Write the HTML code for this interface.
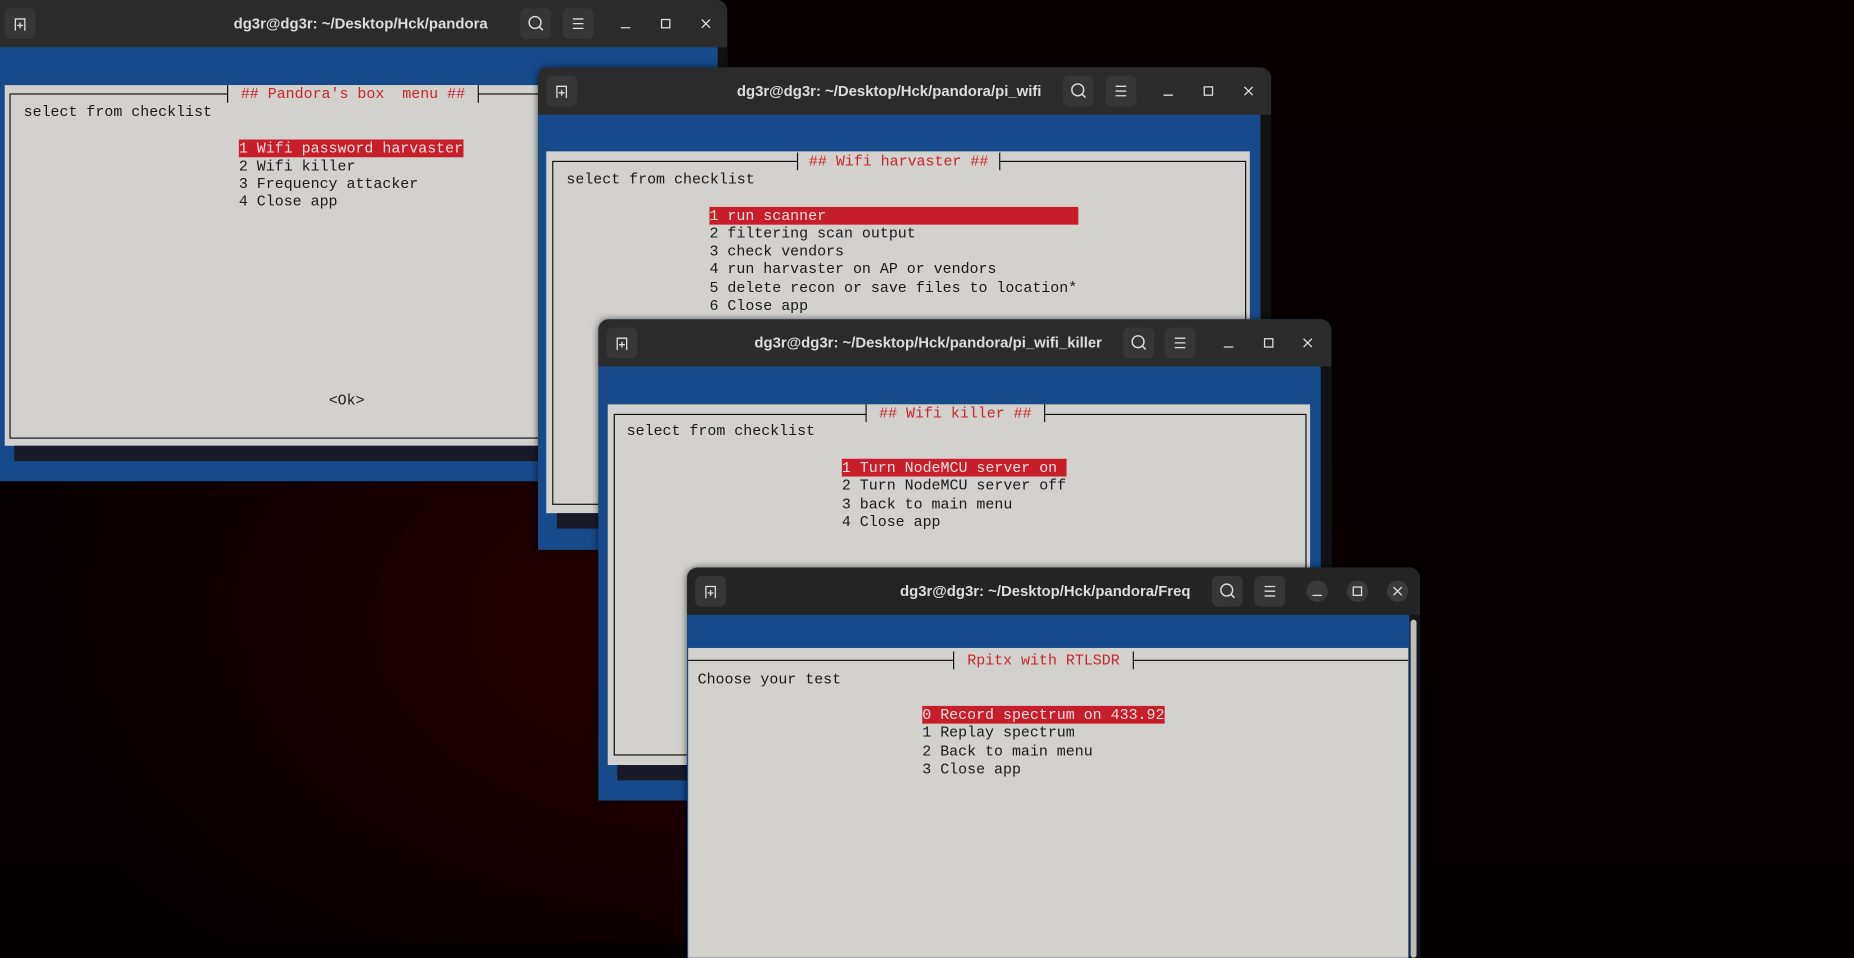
<!DOCTYPE html>
<html><head><meta charset="utf-8"><style>
html,body{margin:0;padding:0;width:1854px;height:943px;overflow:hidden;background:#050000}
#bg{position:absolute;left:0;top:0;width:1854px;height:943px;
background:radial-gradient(ellipse 700px 450px at 700px 620px,#240000 0%,#1a0000 45%,rgba(10,0,0,0) 100%),linear-gradient(180deg,#0a0000,#050000);}
#wrap{position:absolute;left:0;top:0;width:1568px;height:798px;transform:scale(1.18240);transform-origin:0 0}
.win{position:absolute;background:#164a8b;border-radius:9px 9px 0 0;overflow:hidden;box-shadow:0 0 6px rgba(0,0,0,.6)}
.tb{position:absolute;left:0;top:0;right:0;height:40px;background:#2b2b2b}
.tb.f{background:#242424}
.ttl{position:absolute;top:0;height:40px;font:bold 12.6px "Liberation Sans",sans-serif;line-height:40px;color:#dcdcdc;white-space:nowrap;transform:translateX(-50%)}
.btn{position:absolute;top:7px;width:26px;height:26px;border-radius:5px;background:#363636}
.btn svg,.wb svg{position:absolute;left:0;top:0}
.wb{position:absolute;top:11px;width:18px;height:18px;border-radius:9px}
.f .wb{background:#3a3a3a}
.sb{position:absolute;top:40px;bottom:0;width:9px;right:0;background:#111}
.dlg{position:absolute;background:#d2d1cd}
.bd{position:absolute;border:1px solid #111}
.sh{position:absolute;background:#191a28}
.lb{position:absolute;height:15px;background:#d2d1cd;border-left:1px solid #111;border-right:1px solid #111;text-align:center;color:#c7262c;font:12.65px/15px "Liberation Mono",monospace;white-space:pre}
.t{position:absolute;font:12.65px/15.25px "Liberation Mono",monospace;color:#1a1a1a;white-space:pre}
.hl{background:#c81e2a;color:#f0e0e0}
</style></head><body>
<div id="bg"></div>
<div id="wrap">

<!-- W1 -->
<div class="win" style="left:0;top:0;width:615px;height:407px;border-radius:0 9px 0 0">
  <div class="tb">
    <div class="btn" style="left:4px"><svg width="26" height="26"><path d="M9 19V9h8v10M13 12v5M10.5 14.5h5" stroke="#ddd" stroke-width="1.1" fill="none"/></svg></div>
    <div class="ttl" style="left:305px">dg3r@dg3r: ~/Desktop/Hck/pandora</div>
    <div class="btn" style="left:440px"><svg width="26" height="26"><circle cx="12.5" cy="12" r="5" stroke="#ddd" stroke-width="1.2" fill="none"/><path d="M16 15.5l3 3" stroke="#ddd" stroke-width="1.3"/></svg></div>
    <div class="btn" style="left:476px"><svg width="26" height="26"><path d="M8.5 9h9M8.5 13h9M8.5 17h9" stroke="#ddd" stroke-width="1.1"/></svg></div>
    <div class="wb" style="left:520px"><svg width="18" height="18"><path d="M5 12.5h8" stroke="#ddd" stroke-width="1.1"/></svg></div>
    <div class="wb" style="left:554px"><svg width="18" height="18"><rect x="5.5" y="5.5" width="7" height="7" stroke="#ddd" stroke-width="1.1" fill="none"/></svg></div>
    <div class="wb" style="left:588px"><svg width="18" height="18"><path d="M5.5 5.5l7 7M12.5 5.5l-7 7" stroke="#ddd" stroke-width="1.1"/></svg></div>
  </div>
  <div class="sb" style="width:8px"></div>
  <div class="dlg" style="left:4px;top:72px;width:601px;height:305px"></div>
  <div class="bd" style="left:8px;top:79px;width:590px;height:290px"></div>
  <div class="sh" style="left:12px;top:377px;width:595px;height:13px"></div>
  <div class="lb" style="left:192px;top:72px;width:211px">## Pandora's box  menu ##</div>
  <div class="t" style="left:20px;top:87px">select from checklist</div>
  <div class="t" style="left:202px;top:117.5px"><span class="hl">1 Wifi password harvaster</span>
2 Wifi killer
3 Frequency attacker
4 Close app</div>
  <div class="t" style="left:278px;top:331px">&lt;Ok&gt;</div>
</div>

<!-- W2 -->
<div class="win" style="left:455px;top:57px;width:620px;height:408px">
  <div class="tb">
    <div class="btn" style="left:7px"><svg width="26" height="26"><path d="M9 19V9h8v10M13 12v5M10.5 14.5h5" stroke="#ddd" stroke-width="1.1" fill="none"/></svg></div>
    <div class="ttl" style="left:297px">dg3r@dg3r: ~/Desktop/Hck/pandora/pi_wifi</div>
    <div class="btn" style="left:444px"><svg width="26" height="26"><circle cx="12.5" cy="12" r="5" stroke="#ddd" stroke-width="1.2" fill="none"/><path d="M16 15.5l3 3" stroke="#ddd" stroke-width="1.3"/></svg></div>
    <div class="btn" style="left:480px"><svg width="26" height="26"><path d="M8.5 9h9M8.5 13h9M8.5 17h9" stroke="#ddd" stroke-width="1.1"/></svg></div>
    <div class="wb" style="left:524px"><svg width="18" height="18"><path d="M5 12.5h8" stroke="#ddd" stroke-width="1.1"/></svg></div>
    <div class="wb" style="left:558px"><svg width="18" height="18"><rect x="5.5" y="5.5" width="7" height="7" stroke="#ddd" stroke-width="1.1" fill="none"/></svg></div>
    <div class="wb" style="left:592px"><svg width="18" height="18"><path d="M5.5 5.5l7 7M12.5 5.5l-7 7" stroke="#ddd" stroke-width="1.1"/></svg></div>
  </div>
  <div class="sb"></div>
  <div class="dlg" style="left:7px;top:71px;width:595px;height:306px"></div>
  <div class="bd" style="left:12px;top:79px;width:585px;height:289px"></div>
  <div class="sh" style="left:16px;top:377px;width:590px;height:13px"></div>
  <div class="lb" style="left:219px;top:72px;width:170px">## Wifi harvaster ##</div>
  <div class="t" style="left:24px;top:87px">select from checklist</div>
  <div class="t" style="left:145px;top:117.5px"><span class="hl" style="display:inline-block;width:312px">1 run scanner</span>
2 filtering scan output
3 check vendors
4 run harvaster on AP or vendors
5 delete recon or save files to location*
6 Close app</div>
</div>

<!-- W3 -->
<div class="win" style="left:506px;top:270px;width:620px;height:407px">
  <div class="tb">
    <div class="btn" style="left:7px"><svg width="26" height="26"><path d="M9 19V9h8v10M13 12v5M10.5 14.5h5" stroke="#ddd" stroke-width="1.1" fill="none"/></svg></div>
    <div class="ttl" style="left:279px">dg3r@dg3r: ~/Desktop/Hck/pandora/pi_wifi_killer</div>
    <div class="btn" style="left:444px"><svg width="26" height="26"><circle cx="12.5" cy="12" r="5" stroke="#ddd" stroke-width="1.2" fill="none"/><path d="M16 15.5l3 3" stroke="#ddd" stroke-width="1.3"/></svg></div>
    <div class="btn" style="left:479px"><svg width="26" height="26"><path d="M8.5 9h9M8.5 13h9M8.5 17h9" stroke="#ddd" stroke-width="1.1"/></svg></div>
    <div class="wb" style="left:524px"><svg width="18" height="18"><path d="M5 12.5h8" stroke="#ddd" stroke-width="1.1"/></svg></div>
    <div class="wb" style="left:558px"><svg width="18" height="18"><rect x="5.5" y="5.5" width="7" height="7" stroke="#ddd" stroke-width="1.1" fill="none"/></svg></div>
    <div class="wb" style="left:591px"><svg width="18" height="18"><path d="M5.5 5.5l7 7M12.5 5.5l-7 7" stroke="#ddd" stroke-width="1.1"/></svg></div>
  </div>
  <div class="sb"></div>
  <div class="dlg" style="left:8px;top:72px;width:594px;height:305px"></div>
  <div class="bd" style="left:13px;top:80px;width:584px;height:287px"></div>
  <div class="sh" style="left:16px;top:377px;width:590px;height:13px"></div>
  <div class="lb" style="left:226px;top:72px;width:150px">## Wifi killer ##</div>
  <div class="t" style="left:24px;top:87px">select from checklist</div>
  <div class="t" style="left:206px;top:118px"><span class="hl" style="display:inline-block;width:190px">1 Turn NodeMCU server on</span>
2 Turn NodeMCU server off
3 back to main menu
4 Close app</div>
</div>

<!-- W4 -->
<div class="win" style="left:581px;top:480px;width:620px;height:330px">
  <div class="tb f">
    <div class="btn" style="left:7px"><svg width="26" height="26"><path d="M9 19V9h8v10M13 12v5M10.5 14.5h5" stroke="#ddd" stroke-width="1.1" fill="none"/></svg></div>
    <div class="ttl" style="left:303px">dg3r@dg3r: ~/Desktop/Hck/pandora/Freq</div>
    <div class="btn" style="left:444px"><svg width="26" height="26"><circle cx="12.5" cy="12" r="5" stroke="#ddd" stroke-width="1.2" fill="none"/><path d="M16 15.5l3 3" stroke="#ddd" stroke-width="1.3"/></svg></div>
    <div class="btn" style="left:480px"><svg width="26" height="26"><path d="M8.5 9h9M8.5 13h9M8.5 17h9" stroke="#ddd" stroke-width="1.1"/></svg></div>
    <div class="wb" style="left:524px"><svg width="18" height="18"><path d="M5 12.5h8" stroke="#ddd" stroke-width="1.1"/></svg></div>
    <div class="wb" style="left:558px"><svg width="18" height="18"><rect x="5.5" y="5.5" width="7" height="7" stroke="#ddd" stroke-width="1.1" fill="none"/></svg></div>
    <div class="wb" style="left:592px"><svg width="18" height="18"><path d="M5.5 5.5l7 7M12.5 5.5l-7 7" stroke="#ddd" stroke-width="1.1"/></svg></div>
  </div>
  <div class="sb" style="background:#161616"></div>
  <div style="position:absolute;left:612px;top:44px;width:5px;bottom:0;background:#bdbdbd;border-radius:3px"></div>
  <div class="dlg" style="left:1px;top:68px;width:609px;height:270px"></div>
  <div style="position:absolute;left:1px;top:78px;width:609px;height:1px;background:#111"></div>
  <div class="lb" style="left:225px;top:71px;width:151px">Rpitx with RTLSDR</div>
  <div class="t" style="left:9px;top:86.5px">Choose your test</div>
  <div class="t" style="left:199px;top:117px"><span class="hl">0 Record spectrum on 433.92</span>
1 Replay spectrum
2 Back to main menu
3 Close app</div>
</div>

</div>
</body></html>
